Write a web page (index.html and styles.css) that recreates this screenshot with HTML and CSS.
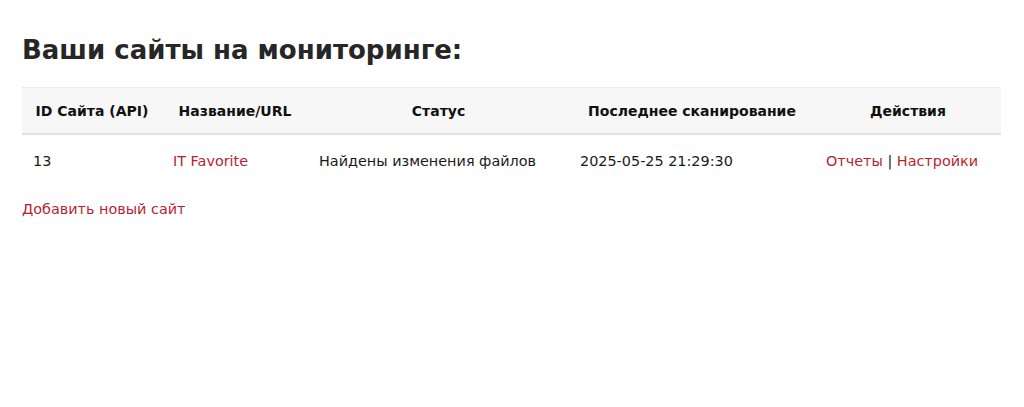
FILE: index.html
```html
<!DOCTYPE html>
<html lang="ru">
<head>
<meta charset="utf-8">
<title>Мониторинг</title>
<link rel="stylesheet" href="styles.css">
</head>
<body>
<main class="page">
  <h1 class="title">Ваши сайты на мониторинге:</h1>
  <table class="sites">
    <colgroup>
      <col class="c-id"><col class="c-name"><col class="c-status"><col class="c-scan"><col class="c-act">
    </colgroup>
    <thead>
      <tr>
        <th>ID Сайта (API)</th>
        <th>Название/URL</th>
        <th>Статус</th>
        <th>Последнее сканирование</th>
        <th>Действия</th>
      </tr>
    </thead>
    <tbody>
      <tr>
        <td>13</td>
        <td><a href="#">IT Favorite</a></td>
        <td>Найдены изменения файлов</td>
        <td>2025-05-25 21:29:30</td>
        <td><a href="#">Отчеты</a> | <a href="#">Настройки</a></td>
      </tr>
    </tbody>
  </table>
  <a class="add" href="#">Добавить новый сайт</a>
</main>
</body>
</html>
```
FILE: styles.css
```css
html, body {
  margin: 0;
  background: #fff;
}
body {
  font-family: "DejaVu Sans", "Noto Sans", sans-serif;
  color: #1f1f1f;
  font-size: 14.4px;
}
.page {
  padding: 0 23px 0 22px;
}
.title {
  margin: 0;
  padding-top: 34px;
  font-size: 26px;
  line-height: 32px;
  font-weight: bold;
  color: #262626;
  letter-spacing: 0;
}
.sites {
  margin-top: 21px;
  width: 979px;
  border-collapse: collapse;
  table-layout: fixed;
}
.c-id { width: 140px; }
.c-name { width: 146px; }
.c-status { width: 261px; }
.c-scan { width: 246px; }
.c-act { width: 186px; }
.sites th {
  background: #f7f7f7;
  border-top: 1px solid #e9ecef;
  border-bottom: 2px solid #dee2e6;
  height: 45px;
  padding: 0 2px;
  font-weight: bold;
  font-size: 14px;
  color: #111;
  text-align: center;
  white-space: nowrap;
}
.sites td {
  height: 48px;
  padding: 2px 11px 0;
  text-align: left;
  white-space: nowrap;
  color: #1a1a1a;
}
a {
  color: #b81f2f;
  text-decoration: none;
}
.add {
  display: inline-block;
  margin-top: 16px;
}
```
